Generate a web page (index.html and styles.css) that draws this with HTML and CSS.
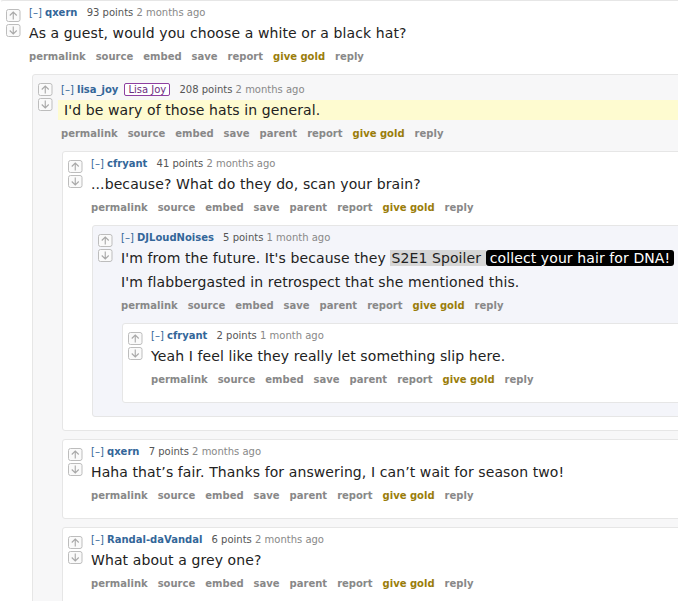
FILE: index.html
```html
<!DOCTYPE html>
<html lang="en">
<head>
    <meta charset="UTF-8">
    <title>comments</title>
    <link rel="stylesheet" href="styles.css">
</head>
<body>
    <svg class="defs" width="0" height="0">
        <symbol id="up" viewBox="0 0 15 13">
            <rect x="0.5" y="0.5" width="13.5" height="12" rx="2" fill="#fafafa" stroke="#bdbdbd"/>
            <path d="M7.25 10.5V3M3.75 6.5L7.25 3L10.75 6.5" fill="none" stroke="#a8a8a8" stroke-width="1.1"/>
        </symbol>
        <symbol id="down" viewBox="0 0 15 13">
            <rect x="0.5" y="0.5" width="13.5" height="12" rx="2" fill="#fafafa" stroke="#bdbdbd"/>
            <path d="M7.25 2.5V10M3.75 6.5L7.25 10L10.75 6.5" fill="none" stroke="#a8a8a8" stroke-width="1.1"/>
        </symbol>
    </svg>

    <div class="comments">
        <div class="comment top">
            <div class="row">
                <div class="midcol">
                    <svg class="arrow"><use href="#up"/></svg>
                    <svg class="arrow"><use href="#down"/></svg>
                </div>
                <div class="entry">
                    <p class="tagline"><a class="expand">[–]</a> <a class="author">qxern</a> <span class="score">93 points</span> 2 months ago</p>
                    <div class="md"><p>As a guest, would you choose a white or a black hat?</p></div>
                    <ul class="buttons">
                        <li>permalink</li><li>source</li><li>embed</li><li>save</li><li>report</li><li class="gold">give gold</li><li>reply</li>
                    </ul>
                </div>
            </div>
            <div class="child">
                <div class="comment grey">
                    <div class="row">
                        <div class="midcol">
                            <svg class="arrow"><use href="#up"/></svg>
                            <svg class="arrow"><use href="#down"/></svg>
                        </div>
                        <div class="entry">
                            <p class="tagline flaired"><a class="expand">[–]</a> <a class="author">lisa_joy</a><span class="flair">Lisa Joy</span> <span class="score">208 points</span> 2 months ago</p>
                            <div class="md hl"><p>I'd be wary of those hats in general.</p></div>
                            <ul class="buttons">
                                <li>permalink</li><li>source</li><li>embed</li><li>save</li><li>parent</li><li>report</li><li class="gold">give gold</li><li>reply</li>
                            </ul>
                        </div>
                    </div>
                    <div class="child">
                        <div class="comment">
                            <div class="row">
                                <div class="midcol">
                                    <svg class="arrow"><use href="#up"/></svg>
                                    <svg class="arrow"><use href="#down"/></svg>
                                </div>
                                <div class="entry">
                                    <p class="tagline"><a class="expand">[–]</a> <a class="author">cfryant</a> <span class="score">41 points</span> 2 months ago</p>
                                    <div class="md"><p>...because? What do they do, scan your brain?</p></div>
                                    <ul class="buttons">
                                        <li>permalink</li><li>source</li><li>embed</li><li>save</li><li>parent</li><li>report</li><li class="gold">give gold</li><li>reply</li>
                                    </ul>
                                </div>
                            </div>
                            <div class="child">
                                <div class="comment blue">
                                    <div class="row">
                                        <div class="midcol">
                                            <svg class="arrow"><use href="#up"/></svg>
                                            <svg class="arrow"><use href="#down"/></svg>
                                        </div>
                                        <div class="entry">
                                            <p class="tagline"><a class="expand">[–]</a> <a class="author">DJLoudNoises</a> <span class="score">5 points</span> 1 month ago</p>
                                            <div class="md">
                                                <p>I'm from the future. It's because they <span class="spoiler-tag">S2E1 Spoiler&nbsp;</span><span class="spoiler">collect your hair for DNA!</span></p>
                                                <p>I'm flabbergasted in retrospect that she mentioned this.</p>
                                            </div>
                                            <ul class="buttons">
                                                <li>permalink</li><li>source</li><li>embed</li><li>save</li><li>parent</li><li>report</li><li class="gold">give gold</li><li>reply</li>
                                            </ul>
                                        </div>
                                    </div>
                                    <div class="child">
                                        <div class="comment">
                                            <div class="row">
                                                <div class="midcol">
                                                    <svg class="arrow"><use href="#up"/></svg>
                                                    <svg class="arrow"><use href="#down"/></svg>
                                                </div>
                                                <div class="entry">
                                                    <p class="tagline"><a class="expand">[–]</a> <a class="author">cfryant</a> <span class="score">2 points</span> 1 month ago</p>
                                                    <div class="md"><p>Yeah I feel like they really let something slip here.</p></div>
                                                    <ul class="buttons">
                                                        <li>permalink</li><li>source</li><li>embed</li><li>save</li><li>parent</li><li>report</li><li class="gold">give gold</li><li>reply</li>
                                                    </ul>
                                                </div>
                                            </div>
                                        </div>
                                    </div>
                                </div>
                            </div>
                        </div>

                        <div class="comment">
                            <div class="row">
                                <div class="midcol">
                                    <svg class="arrow"><use href="#up"/></svg>
                                    <svg class="arrow"><use href="#down"/></svg>
                                </div>
                                <div class="entry">
                                    <p class="tagline"><a class="expand">[–]</a> <a class="author">qxern</a> <span class="score">7 points</span> 2 months ago</p>
                                    <div class="md"><p>Haha that’s fair. Thanks for answering, I can’t wait for season two!</p></div>
                                    <ul class="buttons">
                                        <li>permalink</li><li>source</li><li>embed</li><li>save</li><li>parent</li><li>report</li><li class="gold">give gold</li><li>reply</li>
                                    </ul>
                                </div>
                            </div>
                        </div>

                        <div class="comment">
                            <div class="row">
                                <div class="midcol">
                                    <svg class="arrow"><use href="#up"/></svg>
                                    <svg class="arrow"><use href="#down"/></svg>
                                </div>
                                <div class="entry">
                                    <p class="tagline"><a class="expand">[–]</a> <a class="author">Randal-daVandal</a> <span class="score">6 points</span> 2 months ago</p>
                                    <div class="md"><p>What about a grey one?</p></div>
                                    <ul class="buttons">
                                        <li>permalink</li><li>source</li><li>embed</li><li>save</li><li>parent</li><li>report</li><li class="gold">give gold</li><li>reply</li>
                                    </ul>
                                </div>
                            </div>
                        </div>
                    </div>
                </div>
            </div>
        </div>
    </div>
</body>
</html>
```

FILE: styles.css
```css
* {
    box-sizing: border-box;
}

body {
    margin: 0;
    background: #fff;
    font-family: "DejaVu Sans", Verdana, Arial, sans-serif;
    overflow: hidden;
}

.defs {
    position: absolute;
}

.comments {
    width: 740px;
}

.comment {
    border: 1px solid #e6e6e6;
    border-radius: 3px;
    padding: 6px 0 6px 5px;
    background: #fff;
    margin-bottom: 7px;
}

/* the outer comment's left edge is cut off in the view */
.comment.top {
    border-left-color: transparent;
}

.comment.top > .child {
    margin-left: 26px;
}

.comment.grey {
    background: #f7f7f8;
}

.comment.blue {
    background: #f4f5fa;
}

.row {
    display: flex;
}

.midcol {
    width: 23px;
    flex: none;
    display: flex;
    flex-direction: column;
    gap: 2px;
    padding-top: 2px;
}

.arrow {
    width: 15px;
    height: 13px;
    display: block;
}

.entry {
    flex: 1;
}

.tagline {
    margin: 0;
    font-size: 10px;
    line-height: 12px;
    color: #888;
}

.tagline.flaired {
    padding-top: 2px;
}

.expand,
.author {
    color: #369;
}

.author {
    font-weight: bold;
    margin-right: 6px;
}

.score {
    color: #555;
}

.flair {
    display: inline-block;
    border: 1px solid #8e3fa0;
    border-radius: 2px;
    padding: 0 3px;
    line-height: 11px;
    color: #6b2f80;
    background: #fff;
    margin-right: 6px;
}

.md p {
    margin: 4px 0;
    font-size: 14px;
    line-height: 20px;
    letter-spacing: 0.1px;
    color: #222;
}

.md.hl {
    background: #fefbd0;
    margin-left: -3px;
    padding-left: 6px;
}

.spoiler-tag {
    background: #d6d6d6;
    padding-left: 1px;
}

.spoiler {
    background: #000;
    color: #fff;
    border-radius: 3px;
    padding: 0 4px;
}

.buttons {
    list-style: none;
    margin: 0;
    padding: 4px 0 10px;
    display: flex;
    gap: 10px;
    font-size: 10px;
    line-height: 12px;
    font-weight: bold;
    color: #888;
}

.buttons .gold {
    color: #9a7d0a;
}

.child {
    margin: 1px 0 0 24px;
    display: flex;
    flex-direction: column;
    gap: 1px;
}
```
